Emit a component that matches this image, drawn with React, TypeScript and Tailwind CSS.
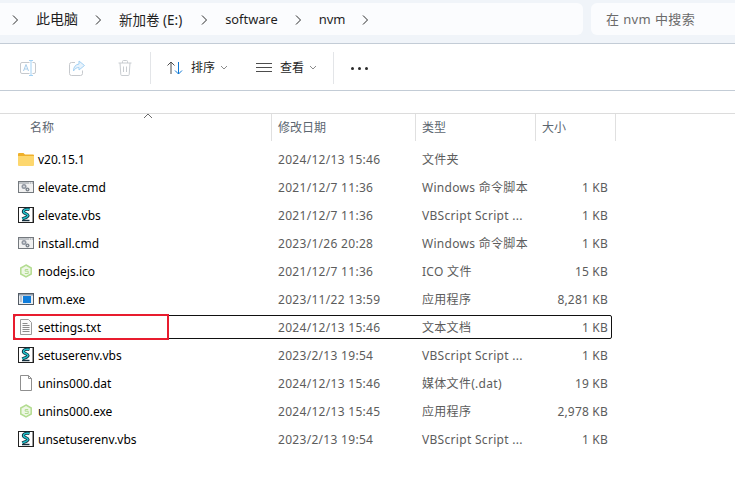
const files = [
  { name: "v20.15.1", date: "2024/12/13 15:46", type: "文件夹", size: "", icon: "folder" },
  { name: "elevate.cmd", date: "2021/12/7 11:36", type: "Windows 命令脚本", size: "1 KB", icon: "cmd" },
  { name: "elevate.vbs", date: "2021/12/7 11:36", type: "VBScript Script ...", size: "1 KB", icon: "vbs" },
  { name: "install.cmd", date: "2023/1/26 20:28", type: "Windows 命令脚本", size: "1 KB", icon: "cmd" },
  { name: "nodejs.ico", date: "2021/12/7 11:36", type: "ICO 文件", size: "15 KB", icon: "node" },
  { name: "nvm.exe", date: "2023/11/22 13:59", type: "应用程序", size: "8,281 KB", icon: "exe" },
  { name: "settings.txt", date: "2024/12/13 15:46", type: "文本文档", size: "1 KB", icon: "txt" },
  { name: "setuserenv.vbs", date: "2023/2/13 19:54", type: "VBScript Script ...", size: "1 KB", icon: "vbs" },
  { name: "unins000.dat", date: "2024/12/13 15:46", type: "媒体文件(.dat)", size: "19 KB", icon: "blank" },
  { name: "unins000.exe", date: "2024/12/13 15:45", type: "应用程序", size: "2,978 KB", icon: "node" },
  { name: "unsetuserenv.vbs", date: "2023/2/13 19:54", type: "VBScript Script ...", size: "1 KB", icon: "vbs" },
];

function FileIcon({ kind }: { kind: string }) {
  if (kind === "folder")
    return (
      <svg width="16" height="16" viewBox="0 0 16 16">
        <path d="M0 3a1 1 0 0 1 1-1h4.500l1.500 1.500h8a1 1 0 0 1 1 1v1.500H0z" fill="#efb02a" />
        <path d="M0 5h16v9a1 1 0 0 1-1 1H1a1 1 0 0 1-1-1z" fill="#fdd76e" />
      </svg>
    );
  if (kind === "cmd")
    return (
      <svg width="16" height="16" viewBox="0 0 16 16">
        <rect x="0.500" y="2.500" width="15" height="11" fill="#f1f1f1" stroke="#74797e" />
        <rect x="1" y="3" width="14" height="2" fill="#bfc3c7" />
        <rect x="11" y="3.500" width="1" height="1" fill="#fff" />
        <rect x="13" y="3.500" width="1" height="1" fill="#fff" />
        <circle cx="6" cy="7.500" r="2.500" fill="#9096a0" />
        <circle cx="6" cy="7.500" r="0.900" fill="#dfe2e6" />
        <circle cx="9.500" cy="10.500" r="2" fill="#7b828a" />
        <circle cx="9.500" cy="10.500" r="0.700" fill="#dfe2e6" />
      </svg>
    );
  if (kind === "vbs")
    return (
      <svg width="16" height="16" viewBox="0 0 16 16">
        <rect x="0.500" y="0.500" width="15" height="15" fill="#fff" stroke="#222" />
        <rect x="14" y="1" width="1" height="14" fill="#9a9a9a" />
        <path d="M11.500 2.500c-3.500-1-6.500.5-6 2.500s4.500 1.500 4.500 3.500-3.500 2-5.500 3.500" fill="none" stroke="#14303f" strokeWidth="3.200" />
        <path d="M11.500 2.500c-3.500-1-6.500.5-6 2.500s4.500 1.500 4.500 3.500-3.500 2-5.500 3.500" fill="none" stroke="#1fc3cc" strokeWidth="1.500" />
        <path d="M4 13.500h7.500" fill="none" stroke="#14303f" strokeWidth="1.500" />
      </svg>
    );
  if (kind === "node")
    return (
      <svg width="16" height="16" viewBox="0 0 16 16">
        <path d="M8 2l5.200 3v6L8 14l-5.200-3V5z" fill="#eef7e6" stroke="#b3dc90" strokeWidth="1.500" />
        <path d="M10.200 6.500H7.200v1.700h3v2.300H6.800" fill="none" stroke="#b3dc90" strokeWidth="1" />
      </svg>
    );
  if (kind === "exe")
    return (
      <svg width="16" height="16" viewBox="0 0 16 16">
        <rect x="0.500" y="2.500" width="15" height="11" fill="#e9edf1" stroke="#535b64" />
        <rect x="1" y="3" width="14" height="1.500" fill="#8f9cab" />
        <rect x="5" y="5" width="8" height="7" fill="#0f7ddb" />
        <rect x="2" y="5.500" width="2" height="1" fill="#8f9cab" />
        <rect x="2" y="7.500" width="2" height="1" fill="#8f9cab" />
        <rect x="2" y="9.500" width="2" height="1" fill="#8f9cab" />
      </svg>
    );
  if (kind === "txt")
    return (
      <svg width="16" height="16" viewBox="0 0 16 16">
        <path d="M2.500 0.500h8l3 3v12h-11z" fill="#fbfbfb" stroke="#9a9a9a" />
        <path d="M4.500 4.500h5M4.500 6.500h7M4.500 8.500h7M4.500 10.500h7M4.500 12.500h7" stroke="#8c8c8c" strokeWidth="1" />
      </svg>
    );
  return (
    <svg width="16" height="16" viewBox="0 0 16 16">
      <path d="M2.500 0.500h8l3 3v12h-11z" fill="#fff" stroke="#8f8f8f" />
      <path d="M10.500 0.500v3h3" fill="none" stroke="#8f8f8f" />
    </svg>
  );
}

function Crumb({ label, size, chevron = "mx-[17px]" }: { label: string; size: string; chevron?: string }) {
  return (
    <>
      <span className={`${size} text-[#1f1f1f] whitespace-nowrap`}>{label}</span>
      <svg width="7" height="10" viewBox="0 0 7 10" className={`${chevron} shrink-0`}>
        <path d="M1 0.500l4.500 4.500-4.500 4.500" fill="none" stroke="#2b2b2b" strokeWidth="1" />
      </svg>
    </>
  );
}

function SmallChevron() {
  return (
    <svg width="8" height="6" viewBox="0 0 8 6" className="ml-[5px]">
      <path d="M1 1l3 3 3-3" fill="none" stroke="#8b8b8b" strokeWidth="1" />
    </svg>
  );
}

export default function App() {
  return (
    <div
      className="relative w-[735px] h-[488px] overflow-hidden bg-white text-xs"
      style={{ fontFamily: '"Noto Sans", "Noto Sans CJK SC", sans-serif' }}
    >
      {/* Address bar */}
      <div className="h-11 pt-[3px] bg-[#f0f4f9] border-b border-[#c3ccd6] flex gap-2">
        <div className="w-[583px] h-8 pl-[12px] pt-px bg-[#fbfcfe] rounded-r-md flex items-center">
          <svg width="7" height="10" viewBox="0 0 7 10" className="mr-[17px] shrink-0">
            <path d="M1 0.500l4.500 4.500-4.500 4.500" fill="none" stroke="#2b2b2b" strokeWidth="1" />
          </svg>
          <Crumb label="此电脑" size="text-[14px]" />
          <Crumb label="新加卷 (E:)" size="text-[13.500px]" chevron="ml-[19px] mr-[17px]" />
          <Crumb label="software" size="text-[12.800px]" />
          <Crumb label="nvm" size="text-[13px]" />
        </div>
        <div className="flex-1 h-8 pl-[15px] pt-px bg-[#fbfcfe] rounded-l-md flex items-center text-[13px] tracking-[0.4px] text-[#6b6b6b]">
          在 nvm 中搜索
        </div>
      </div>

      {/* Toolbar */}
      <div className="h-[47px] pt-[2px] border-b border-[#c3ccd6] flex items-center pl-5">
        <svg width="16" height="16" viewBox="0 0 16 16" className="shrink-0">
          <path d="M9.500 2.500H2a1.500 1.500 0 0 0-1.500 1.500v8A1.500 1.500 0 0 0 2 13.500h7.500M12.500 2.500H14A1.500 1.500 0 0 1 15.500 4v8a1.500 1.500 0 0 1-1.500 1.500h-1.500" fill="none" stroke="#c6c9cd" />
          <path d="M3.500 11l2.500-6.500L8.500 11M4.500 9h3" fill="none" stroke="#a9cdea" />
          <path d="M11 0.500v15M9 0.500h4M9 15.500h4" stroke="#a4d2f4" />
        </svg>
        <svg width="16" height="16" viewBox="0 0 16 16" className="ml-[33px] shrink-0">
          <path d="M6 2.500H2.500a2 2 0 0 0-2 2v9a2 2 0 0 0 2 2h9a2 2 0 0 0 2-2v-3" fill="none" stroke="#c6c9cd" />
          <path d="M10 1l5.500 4.500L10 10V7.500c-2.500 0-4 1-5.500 3.500 0-4 2-6.500 5.500-7z" fill="#e8f3fc" stroke="#a4d2f4" />
        </svg>
        <svg width="14" height="16" viewBox="0 0 14 16" className="ml-[33px] shrink-0">
          <path d="M0.500 3h13M4.500 3V1.500a1 1 0 0 1 1-1h3a1 1 0 0 1 1 1V3M2 3l.8 11.500a1 1 0 0 0 1 1h6.400a1 1 0 0 0 1-1L12 3M5.500 6.500v5.500M8.500 6.500v5.500" fill="none" stroke="#c9cdd1" />
        </svg>
        <div className="ml-[18px] w-px h-8 bg-[#e3e5e8]" />
        <svg width="16" height="14" viewBox="0 0 16 14" className="ml-4 shrink-0">
          <path d="M4 13V1M0.500 4.500L4 1l3.500 3.500" fill="none" stroke="#4d4d4d" />
          <path d="M11.500 1v12M8 9.500l3.500 3.500 3.500-3.500" fill="none" stroke="#0f78d4" />
        </svg>
        <span className="ml-2 text-[#1f1f1f]">排序</span>
        <SmallChevron />
        <svg width="16" height="10" viewBox="0 0 16 10" className="ml-[28px] shrink-0">
          <path d="M0 0.500h16M0 4.500h16M0 8.500h16" stroke="#4d4d4d" />
        </svg>
        <span className="ml-2 text-[#1f1f1f]">查看</span>
        <SmallChevron />
        <div className="ml-4 w-px h-8 bg-[#e3e5e8]" />
        <div className="ml-[17px] flex gap-[4px]">
          <div className="w-[3px] h-[3px] rounded-full bg-[#2b2b2b]" />
          <div className="w-[3px] h-[3px] rounded-full bg-[#2b2b2b]" />
          <div className="w-[3px] h-[3px] rounded-full bg-[#2b2b2b]" />
        </div>
      </div>

      {/* Column headers */}
      <div className="mt-[22px] h-7 border-t border-[#dcdcdc] flex text-[#5c6670]">
        <div className="w-[272px] pl-[30px] pt-[6px] border-r border-[#e0e0e0]">名称</div>
        <div className="w-[144px] pl-[6px] pt-[6px] border-r border-[#e0e0e0]">修改日期</div>
        <div className="w-[120px] pl-[6px] pt-[6px] border-r border-[#e0e0e0]">类型</div>
        <div className="w-[80px] pl-[6px] pt-[6px] border-r border-[#e0e0e0]">大小</div>
      </div>
      <svg width="10" height="6" viewBox="0 0 10 6" className="absolute left-[143px] top-[113px]">
        <path d="M1 5l4-4 4 4" fill="none" stroke="#6b6b6b" />
      </svg>

      {/* File rows */}
      <div className="mt-[6px] ml-[14px] w-[598px] flex flex-col gap-1">
        {files.map((f) => (
          <div
            key={f.name}
            className={`h-6 flex items-center pl-1 pr-1 ${
              f.name === "settings.txt" ? "outline outline-1 -outline-offset-1 outline-[#111] rounded-[2px]" : ""
            }`}
          >
            <div className="w-4 h-4 shrink-0">
              <FileIcon kind={f.icon} />
            </div>
            <div className="w-[244px] pl-1 pt-px text-black">{f.name}</div>
            <div className="w-[144px] pt-px tracking-[0.3px] text-[#5c5c5c]">{f.date}</div>
            <div className="w-[120px] pt-px whitespace-nowrap tracking-[0.3px] text-[#5c5c5c]">{f.type}</div>
            <div className="flex-1 pt-px text-right whitespace-nowrap tracking-[0.2px] text-[#5c5c5c]">{f.size}</div>
          </div>
        ))}
      </div>

      {/* Red annotation around settings.txt */}
      <div className="absolute left-[13px] top-[314px] w-[156px] h-[26px] border-2 border-[#e81c2e]" />
    </div>
  );
}
